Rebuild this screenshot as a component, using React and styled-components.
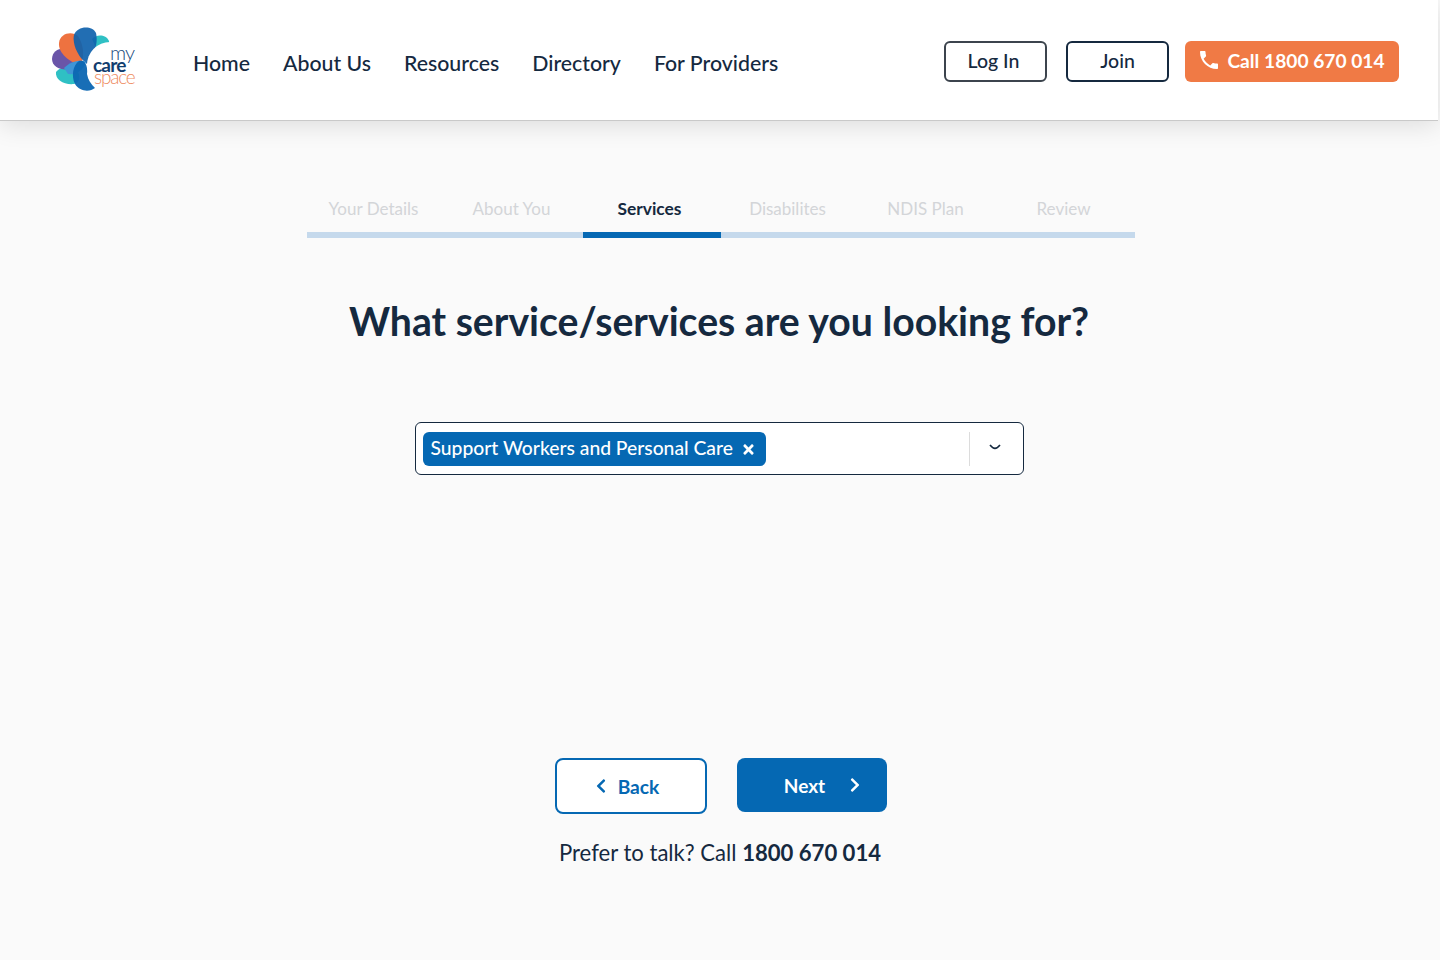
import React from 'react'
import styled, { createGlobalStyle } from 'styled-components'
import { MdPhone } from 'react-icons/md'
import { FaChevronLeft, FaChevronRight, FaTimes } from 'react-icons/fa'

const GlobalStyle = createGlobalStyle`
  html, body { margin: 0; padding: 0; background: #fafafa; }
  body { font-family: "Lato", "Liberation Sans", sans-serif; color: #15293f; overflow: hidden; }
  * { box-sizing: border-box; }
`

const Page = styled.div`
  width: 1440px;
  height: 960px;
  display: flex;
  flex-direction: column;
  align-items: center;
`

const Header = styled.header`
  width: 1438px;
  height: 121px;
  align-self: flex-start;
  background: #fff;
  border-bottom: 1px solid #c9c9c9;
  box-shadow: 0 4px 24px rgba(0, 0, 0, 0.12);
  display: flex;
  align-items: center;
  padding: 0 39px 0 50px;
`

const LogoMark = styled.svg`
  width: 88px;
  height: 68px;
  flex: none;
`

const Nav = styled.nav`
  display: flex;
  gap: 33px;
  margin-left: 55px;
  margin-top: 6px;
`

const NavLink = styled.a`
  font-size: 21.3px;
  font-weight: 500;
  color: #15293f;
  white-space: nowrap;
`

const Actions = styled.div`
  margin-left: auto;
  margin-top: 2px;
  display: flex;
  align-items: center;
  gap: 19px;
`

const OutlineButton = styled.button`
  width: 103px;
  height: 41px;
  background: #fff;
  border: 2px solid ${p => (p.$muted ? '#3c444d' : '#15293f')};
  border-radius: 6px;
  padding: 0 ${p => (p.$muted ? '4px' : '0')} 2px 0;
  font: 500 19.5px "Lato", sans-serif;
  color: #15293f;
`

const CallButton = styled.button`
  width: 214px;
  height: 41px;
  margin-left: -3px;
  padding: 0 2px 2px 0;
  background: #f07a45;
  border: 0;
  border-radius: 6px;
  color: #fff;
  font: 700 19.2px "Lato", sans-serif;
  display: flex;
  align-items: center;
  justify-content: center;
  gap: 6px;
  white-space: nowrap;
`

const Main = styled.main`
  width: 828px;
  margin-left: 2px;
  display: flex;
  flex-direction: column;
  align-items: center;
`

const Steps = styled.div`
  width: 828px;
  margin-top: 78px;
  display: grid;
  grid-template-columns: repeat(6, 1fr);
`

const Step = styled.div`
  height: 39px;
  padding-right: 5px;
  text-align: center;
  font-size: ${p => (p.$active ? '17.4px' : '17px')};
  line-height: 20px;
  font-weight: ${p => (p.$active ? 700 : 400)};
  color: ${p => (p.$active ? '#15293f' : '#d3d5d8')};
  border-bottom: 6px solid ${p => (p.$active ? '#0568b3' : '#c5d9ec')};
`

const Title = styled.h1`
  margin: 59px 0 0 -4px;
  font-size: 39.2px;
  line-height: 48px;
  font-weight: 700;
  color: #15293f;
  white-space: nowrap;
`

const Select = styled.div`
  width: 609px;
  height: 53px;
  margin: 77px 0 0 -4px;
  background: #fff;
  border: 1px solid #15293f;
  border-radius: 6px;
  display: flex;
  align-items: center;
  padding-left: 7px;
`

const Chip = styled.div`
  height: 34px;
  width: 343px;
  margin-top: 1px;
  background: #0568b3;
  border-radius: 6px;
  color: #fff;
  font-size: 19.3px;
  font-weight: 500;
  display: flex;
  align-items: center;
  justify-content: space-between;
  padding: 0 10px 3px 8px;
  white-space: nowrap;

  svg { margin-top: 3px; }
`

const Caret = styled.div`
  margin-left: auto;
  width: 54px;
  height: 34px;
  padding: 0 2px 4px 0;
  border-left: 1px solid #dcdcdc;
  display: flex;
  align-items: center;
  justify-content: center;
`

const Buttons = styled.div`
  display: flex;
  align-items: flex-start;
  gap: 30px;
  margin: 283px 0 0 0;
`

const BackButton = styled.button`
  width: 152px;
  height: 56px;
  padding: 0 10px 0 0;
  background: #fff;
  border: 2px solid #0568b3;
  border-radius: 8px;
  color: #0568b3;
  font: 700 19.2px "Lato", sans-serif;
  display: flex;
  align-items: center;
  justify-content: center;
  gap: 9px;
`

const NextButton = styled.button`
  width: 150px;
  height: 54px;
  background: #0568b3;
  border: 0;
  border-radius: 8px;
  color: #fff;
  font: 700 19px "Lato", sans-serif;
  display: flex;
  align-items: center;
  justify-content: center;
  gap: 22px;
  padding: 0 0 0 23px;
`

const Prefer = styled.p`
  margin: 24px 0 0 -2px;
  font-size: 22.1px;
  line-height: 30px;
  color: #15293f;
  white-space: nowrap;

  strong { font-weight: 700; }
`

const steps = ['Your Details', 'About You', 'Services', 'Disabilites', 'NDIS Plan', 'Review']
const links = ['Home', 'About Us', 'Resources', 'Directory', 'For Providers']

function Logo() {
  return (
    <LogoMark viewBox="0 0 88 68">
      <path d="M42 13 C46 8 56 8 59 15 C60 22 55 28 49 28 C46 22 44 18 42 13 Z" fill="#2fc0c4" />
      <path d="M6 46 C10 40 22 40 27 44 C31 50 30 57 24 58 C14 59 5 54 6 46 Z" fill="#2fc0c4" />
      <path d="M2 33 C2 25 10 21 17 23 C25 26 28 36 23 42 C14 46 2 42 2 33 Z" fill="#6a55a8" />
      <path d="M9 17 C10 7 22 5 28 10 C33 18 35 28 31 39 C20 37 8 27 9 17 Z" fill="#ee7240" />
      <path d="M24 9 C27 0 42 -1 46 7 C48 15 46 26 37 38 C28 31 22 18 24 9 Z" fill="#0f62ad" fillOpacity="0.92" />
      <path d="M14 42 C20 35 32 33 36 36 C33 45 26 49 18 48 Z" fill="#3f95d6" />
      <path d="M29 35 C36 33 38 42 37 48 C38 54 41 58 45 62 C40 66 30 66 25 58 C21 50 23 39 29 35 Z" fill="#0c66b2" fillOpacity="0.95" />
      <circle cx="60" cy="39" r="23" fill="#fff" />
      <text x="60" y="34" fontFamily="Lato" fontWeight="300" fontSize="20" letterSpacing="-1" fill="#16497c">my</text>
      <text x="43" y="46" fontFamily="Lato" fontWeight="700" fontSize="19" letterSpacing="-0.8" fill="#123d6e">care</text>
      <text x="44" y="58" fontFamily="Lato" fontWeight="300" fontSize="19" letterSpacing="-1.2" fill="#ee8a5e">space</text>
    </LogoMark>
  )
}

export default function App() {
  return (
    <Page>
      <GlobalStyle />
      <Header>
        <Logo />
        <Nav>
          {links.map(l => <NavLink key={l}>{l}</NavLink>)}
        </Nav>
        <Actions>
          <OutlineButton $muted>Log In</OutlineButton>
          <OutlineButton>Join</OutlineButton>
          <CallButton><MdPhone size={24} />Call 1800 670 014</CallButton>
        </Actions>
      </Header>
      <Main>
        <Steps>
          {steps.map(s => <Step key={s} $active={s === 'Services'}>{s}</Step>)}
        </Steps>
        <Title>What service/services are you looking for?</Title>
        <Select>
          <Chip>
            Support Workers and Personal Care
            <FaTimes size={15} />
          </Chip>
          <Caret>
            <svg width="12" height="6" viewBox="0 0 12 6" fill="none" stroke="#15293f" strokeWidth="1.6">
              <path d="M1 1 C3 3.5 4.5 4.4 6 4.4 C7.5 4.4 9 3.5 11 1" />
            </svg>
          </Caret>
        </Select>
        <Buttons>
          <BackButton><FaChevronLeft size={16} />Back</BackButton>
          <NextButton>Next<FaChevronRight size={16} /></NextButton>
        </Buttons>
        <Prefer>Prefer to talk? Call <strong>1800 670 014</strong></Prefer>
      </Main>
    </Page>
  )
}
